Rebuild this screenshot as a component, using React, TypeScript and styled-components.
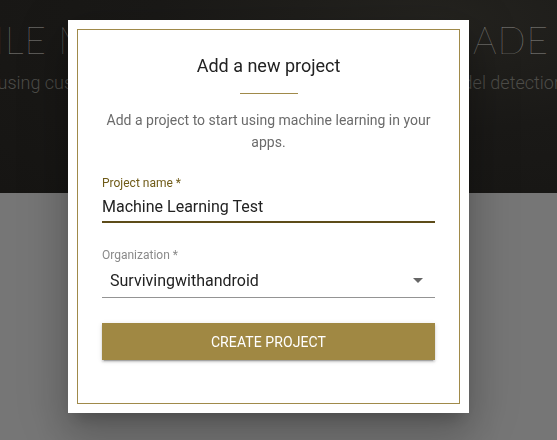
import React from "react";
import styled, { createGlobalStyle } from "styled-components";

const GlobalStyle = createGlobalStyle`
  html, body {
    margin: 0;
    padding: 0;
    background: #767676;
    font-family: Roboto, "Liberation Sans", Arial, sans-serif;
  }
  * {
    box-sizing: border-box;
  }
`;

const Page = styled.div`
  width: 100%;
  height: 440px;
  overflow: hidden;
  background: #767676;
`;

const Hero = styled.header`
  height: 193px;
  background: radial-gradient(ellipse at 78% 10%, #24231f 0%, #1a1917 45%, #161513 100%);
  display: flex;
  flex-direction: column;
  align-items: center;
  padding-top: 18px;
  overflow: hidden;
`;

const HeroTitle = styled.h1`
  margin: 0;
  white-space: nowrap;
  font-family: Lato, "Liberation Sans", sans-serif;
  font-weight: 100;
  font-size: 37px;
  line-height: 44px;
  letter-spacing: 0.9px;
  color: #8d8c88;
`;

const HeroSubtitle = styled.p`
  margin: 10px 0 0;
  white-space: nowrap;
  font-size: 18px;
  font-weight: 300;
  color: #4d4c48;
`;

const Backdrop = styled.div`
  position: fixed;
  inset: 0;
  display: flex;
  align-items: center;
  justify-content: center;
  padding: 0 20px 7px 0;
`;

const Dialog = styled.div`
  width: 401px;
  height: 393px;
  background: #fff;
  padding: 9px;
  box-shadow: 0 11px 15px -7px rgba(0, 0, 0, 0.2),
    0 24px 38px 3px rgba(0, 0, 0, 0.14), 0 9px 46px 8px rgba(0, 0, 0, 0.12);
`;

const Frame = styled.div`
  height: 100%;
  border: 1px solid #a08a4a;
  padding: 24px 24px;
  display: flex;
  flex-direction: column;
`;

const Title = styled.h2`
  margin: 0;
  text-align: center;
  font-size: 18px;
  line-height: 24px;
  font-weight: 400;
  color: #222;
`;

const Divider = styled.hr`
  width: 58px;
  height: 1px;
  margin: 15px auto 0;
  border: 0;
  background: #a08a4a;
`;

const Description = styled.p`
  margin: 15px 0 0;
  text-align: center;
  font-size: 14px;
  line-height: 22px;
  color: #6b6b6b;
`;

const Field = styled.label<{ $gap: number }>`
  display: flex;
  flex-direction: column;
  margin-top: ${(p) => p.$gap}px;
`;

const FieldLabel = styled.span<{ $active?: boolean }>`
  font-size: 12px;
  line-height: 16px;
  color: ${(p) => (p.$active ? "#6f5b18" : "#8a8a8a")};
`;

const TextInput = styled.input`
  border: 0;
  border-bottom: 2px solid #5d4c19;
  outline: none;
  padding: 6px 0 5px;
  font-family: inherit;
  font-size: 16px;
  line-height: 19px;
  color: #222;
  background: transparent;
`;

const SelectBox = styled.div`
  display: flex;
  align-items: center;
  justify-content: space-between;
  padding: 7px 12px 6px 8px;
  border-bottom: 1px solid #949494;
  font-size: 16px;
  line-height: 21px;
  color: #222;
`;

const Caret = styled.span`
  width: 0;
  height: 0;
  border-left: 5px solid transparent;
  border-right: 5px solid transparent;
  border-top: 5px solid #666;
`;

const CreateButton = styled.button`
  margin-top: 25px;
  height: 37px;
  border: 0;
  background: #a08843;
  color: #fff;
  font-family: inherit;
  font-size: 14px;
  letter-spacing: 0.1px;
  text-transform: uppercase;
  box-shadow: 0 3px 1px -2px rgba(0, 0, 0, 0.2), 0 2px 2px 0 rgba(0, 0, 0, 0.14),
    0 1px 5px 0 rgba(0, 0, 0, 0.12);
  cursor: pointer;
`;

export default function App() {
  return (
    <Page>
      <GlobalStyle />
      <Hero>
        <HeroTitle>MOBILE MACHINE LEARNING MADE EASY</HeroTitle>
        <HeroSubtitle>
          Build apps using custom TF Lite models for image recognition and model detection on mobile
        </HeroSubtitle>
      </Hero>
      <Backdrop>
        <Dialog role="dialog">
          <Frame>
            <Title>Add a new project</Title>
            <Divider />
            <Description>Add a project to start using machine learning in your apps.</Description>
            <Field $gap={22}>
              <FieldLabel $active>Project name *</FieldLabel>
              <TextInput defaultValue="Machine Learning Test" />
            </Field>
            <Field $gap={24}>
              <FieldLabel>Organization *</FieldLabel>
              <SelectBox>
                <span>Survivingwithandroid</span>
                <Caret />
              </SelectBox>
            </Field>
            <CreateButton>Create project</CreateButton>
          </Frame>
        </Dialog>
      </Backdrop>
    </Page>
  );
}
